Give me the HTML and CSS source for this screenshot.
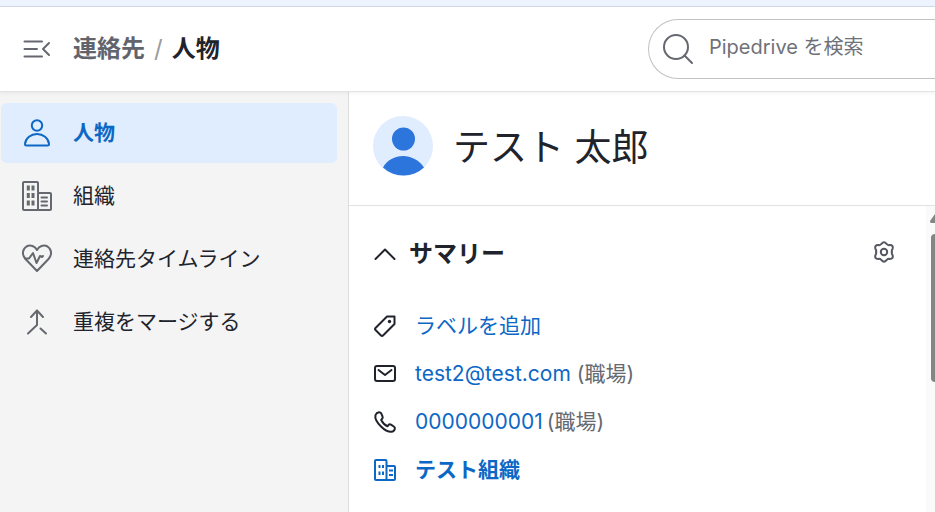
FILE: index.html
```html
<!DOCTYPE html>
<html lang="ja">
    <head>
        <meta charset="utf-8" />
        <title>テスト 太郎 - Pipedrive</title>
        <link rel="stylesheet" href="styles.css">
    </head>
    <body>
        <header class="header">
            <button type="button" class="icon-button menu-toggle" aria-label="メニュー">
                <svg width="30" height="30" viewBox="0 0 30 30"><path d="M2.500 7.500H20M2.500 15H15M2.500 22.500H20M27 9L21 15L27 21" /></svg>
            </button>
            <div class="breadcrumb">
                <a href="#">連絡先</a>
                <span class="slash">/</span>
                <span class="current">人物</span>
            </div>
            <div class="search">
                <svg width="32" height="32" viewBox="0 0 32 32"><circle cx="14" cy="14" r="12" /><path d="M22.500 22.500L30 30" /></svg>
                <input type="text" placeholder="Pipedrive を検索" aria-label="Pipedrive を検索" />
            </div>
        </header>
        <div class="container">
            <nav class="sidebar">
                <a href="#" class="active">
                    <svg width="32" height="32" viewBox="0 0 32 32"><circle cx="16" cy="8.500" r="5.200" /><path d="M5.500 28.500C4.600 28.500 4 27.900 4 27C4.500 21 10 17 16 17S27.500 21 28 27C28 27.900 27.400 28.500 26.500 28.500Z" /></svg>
                    人物
                </a>
                <a href="#">
                    <svg width="32" height="32" viewBox="0 0 32 32"><path d="M17 12V3Q17 2 16 2H3Q2 2 2 3V29Q2 30 3 30H29Q30 30 30 29V14Q30 13 29 13H17V30" /><path class="windows" d="M7.300 5.500V10.500M12 5.500V10.500M7.300 13V18M12 13V18M7.300 20.500V25.500M12 20.500V25.500" /><path d="M20.500 17.500H26M20.500 21.500H26M20.500 25.500H26" /></svg>
                    組織
                </a>
                <a href="#">
                    <svg width="32" height="32" viewBox="0 0 32 32"><path d="M16 28L4.500 16C0.500 11.500 1.500 6 5.500 3.500C9.500 1.300 14 3.300 16 7C18 3.300 22.500 1.300 26.500 3.500C30.500 6 31.500 11.500 27.500 16Z" /><path d="M4 15.500H8L12 10L15.500 20L19 13L21 14L22 13" /></svg>
                    連絡先タイムライン
                </a>
                <a href="#">
                    <svg width="32" height="32" viewBox="0 0 32 32"><path d="M10 11L16 4.500L22 11M16 4.500V19L7 27.500M19.500 22.500L25 27.500" /></svg>
                    重複をマージする
                </a>
            </nav>
            <main class="main">
                <div class="person">
                    <svg class="avatar" width="60" height="60" viewBox="0 0 60 60">
                        <circle cx="30" cy="30" r="30" fill="#e0edff" />
                        <circle cx="30.500" cy="23" r="11.500" fill="#2c75dc" />
                        <path d="M10 51.500C14 44 22 40 30 40S46 44 51 51.500A30 30 0 0 1 10 51.500Z" fill="#2c75dc" />
                    </svg>
                    <h1>テスト 太郎</h1>
                </div>
                <div class="panel">
                    <section class="summary">
                        <div class="summary-header">
                            <button type="button" class="icon-button" aria-label="折りたたむ">
                                <svg width="24" height="24" viewBox="0 0 24 24"><path d="M2.500 18L12 8.500L21.500 18" /></svg>
                            </button>
                            <h2>サマリー</h2>
                            <button type="button" class="icon-button settings" aria-label="設定">
                                <svg width="24" height="24" viewBox="0 0 24 24"><circle cx="12" cy="11" r="3.200" /><path d="M9.500 2.800Q12 -0.200 14.500 2.800Q15.500 4.400 17.500 4.100Q21.600 3.800 20.600 7.800Q19.300 9.500 20 11Q19.300 12.500 20.600 14.200Q21.600 18.200 17.500 17.900Q15.500 17.600 14.500 19.200Q12 22.200 9.500 19.200Q8.500 17.600 6.500 17.900Q2.400 18.200 3.400 14.200Q4.700 12.500 4 11Q4.700 9.500 3.400 7.800Q2.400 3.800 6.500 4.100Q8.500 4.400 9.500 2.800Z" /></svg>
                            </button>
                        </div>
                        <ul class="details">
                            <li>
                                <svg width="24" height="24" viewBox="0 0 24 24"><path d="M14 2.500H21.500V10L10 21.500Q9 22.500 8 21.500L2.500 16Q1.500 15 2.500 14Z" /><circle class="dot" cx="16.500" cy="7.500" r="1.700" /></svg>
                                <a href="#">ラベルを追加</a>
                            </li>
                            <li>
                                <svg width="24" height="24" viewBox="0 0 24 24"><rect x="2" y="4" width="20" height="15" rx="2" /><path d="M5.500 8L12 13L18.500 8" /></svg>
                                <span><a href="#">test2@test.com</a> <span class="type">(職場)</span></span>
                            </li>
                            <li>
                                <svg width="24" height="24" viewBox="0 0 24 24"><path d="M6 2.200Q3.500 2.500 2.500 5C1.500 9 5 13.500 8 16.500S15 22 18.500 21.800Q21 21.500 21.800 19Q22.300 17.500 20.800 16.500L18 14.600Q16.500 13.800 15.500 15L14.500 16.300C12.500 15.500 9.500 12.500 8.200 10L9.300 8.700Q10 7.700 9.500 6.500L8.300 3.500Q7.500 2.100 6 2.200Z" /></svg>
                                <span class="phone"><a href="#">0000000001</a><span class="type">(職場)</span></span>
                            </li>
                            <li class="organization">
                                <svg width="24" height="24" viewBox="0 0 24 24"><path d="M13.500 22V3Q13.500 2 12.500 2H3Q2 2 2 3V21Q2 22 3 22H21Q22 22 22 21V9Q22 8 21 8H13.500" /><path class="windows" d="M6.500 7V10M10 7V10M6.500 13.500V17M10 13.500V17M16 12.500H20M16 17H20" /></svg>
                                <a href="#">テスト組織</a>
                            </li>
                        </ul>
                    </section>
                    <div class="scrollbar">
                        <svg width="5" height="9" viewBox="0 0 5 9"><path d="M5 0L0 7Q0 9 1 9H5Z" /></svg>
                        <div class="thumb"></div>
                    </div>
                </div>
            </main>
        </div>
    </body>
</html>
```
FILE: styles.css
```css
*{
    box-sizing: border-box;
}

body{
    margin: 0;
    min-height: 100vh;
    display: flex;
    flex-direction: column;
    border-top: 6px solid #edf4ff;
    background-color: #fff;
    color: #21232c;
    font-family: Inter, "Noto Sans CJK JP", sans-serif;
    font-size: 21px;
    line-height: 32px;
}

a{
    color: #0d68c5;
    text-decoration: none;
}

svg{
    flex: none;
    display: block;
    fill: none;
    stroke: currentColor;
    stroke-width: 2;
    stroke-linecap: round;
    stroke-linejoin: round;
}

.icon-button{
    padding: 0;
    border: 0;
    background: none;
    color: inherit;
    cursor: pointer;
}

.header{
    display: flex;
    align-items: center;
    height: 86px;
    padding-left: 22px;
    border-top: 1px solid #d0d6e4;
    border-bottom: 1px solid #e2e2e3;
    box-shadow: 0 1px 4px rgba(0, 0, 0, 0.06);
    position: relative;
}

.menu-toggle{
    color: #65686f;
}

.breadcrumb{
    display: flex;
    gap: 9px;
    margin-left: 21px;
    font-size: 24px;
    font-weight: 600;
}

.breadcrumb a{
    color: #62646d;
}

.slash{
    color: #9a9ba1;
    font-weight: 400;
}

.search{
    display: flex;
    align-items: center;
    gap: 15px;
    width: 287px;
    height: 60px;
    margin-left: auto;
    padding-left: 13px;
    border: 1px solid #c2c2c5;
    border-right: 0;
    border-radius: 30px 0 0 30px;
    color: #65686f;
}

.search input{
    flex: 1;
    min-width: 0;
    padding: 0 0 4px;
    border: 0;
    outline: 0;
    background: none;
    font: inherit;
    font-size: 20px;
}

.search input::placeholder{
    color: #6f7179;
}

.container{
    flex: 1;
    display: flex;
}

.sidebar{
    flex: none;
    display: flex;
    flex-direction: column;
    gap: 3px;
    width: 349px;
    padding: 11px 11px 0 1px;
    background-color: #f4f4f4;
    border-right: 1px solid #dcdcdd;
}

.sidebar a{
    display: flex;
    align-items: center;
    gap: 20px;
    height: 60px;
    padding: 0 0 1px 20px;
    border-radius: 6px;
    color: #21232c;
}

.sidebar svg{
    color: #65686f;
}

.sidebar .windows{
    stroke-width: 3;
    stroke-linecap: butt;
}

.sidebar .active{
    background-color: #e0edff;
    color: #0d68c5;
    font-weight: 600;
}

.sidebar .active svg{
    color: #0d68c5;
}

.main{
    flex: 1;
    min-width: 0;
    display: flex;
    flex-direction: column;
}

.person{
    display: flex;
    align-items: center;
    gap: 20px;
    height: 114px;
    padding: 0 24px 6px;
    border-bottom: 1px solid #e2e2e3;
}

.avatar{
    stroke: none;
}

h1{
    margin: 0;
    padding-top: 4px;
    font-size: 37px;
    font-weight: 400;
    line-height: 56px;
}

.panel{
    flex: 1;
    display: flex;
}

.summary{
    flex: 1;
    padding: 30px 30px 0 24px;
}

.summary-header{
    display: flex;
    align-items: center;
    gap: 12px;
}

h2{
    margin: 0;
    padding-top: 2px;
    font-size: 24px;
    font-weight: 600;
    line-height: 32px;
}

.settings{
    margin-left: auto;
    color: #555761;
}

.details{
    display: flex;
    flex-direction: column;
    gap: 16px;
    margin: 40px 0 0;
    padding: 0;
    list-style: none;
}

.details li{
    display: flex;
    align-items: center;
    gap: 18px;
}

.details .dot{
    fill: currentColor;
    stroke: none;
}

.phone{
    display: flex;
    gap: 4px;
}

.type{
    color: #65686f;
}

.organization{
    color: #0d68c5;
    font-weight: 600;
}

.organization .windows{
    stroke-linecap: butt;
}

.scrollbar{
    display: flex;
    flex-direction: column;
    align-items: flex-end;
    gap: 11px;
    width: 9px;
    padding-top: 8px;
    background-color: #fafafa;
}

.scrollbar svg{
    fill: #858585;
    stroke: none;
}

.thumb{
    width: 4px;
    height: 148px;
    border-radius: 4px 0 0 4px;
    background-color: #858585;
}
```
